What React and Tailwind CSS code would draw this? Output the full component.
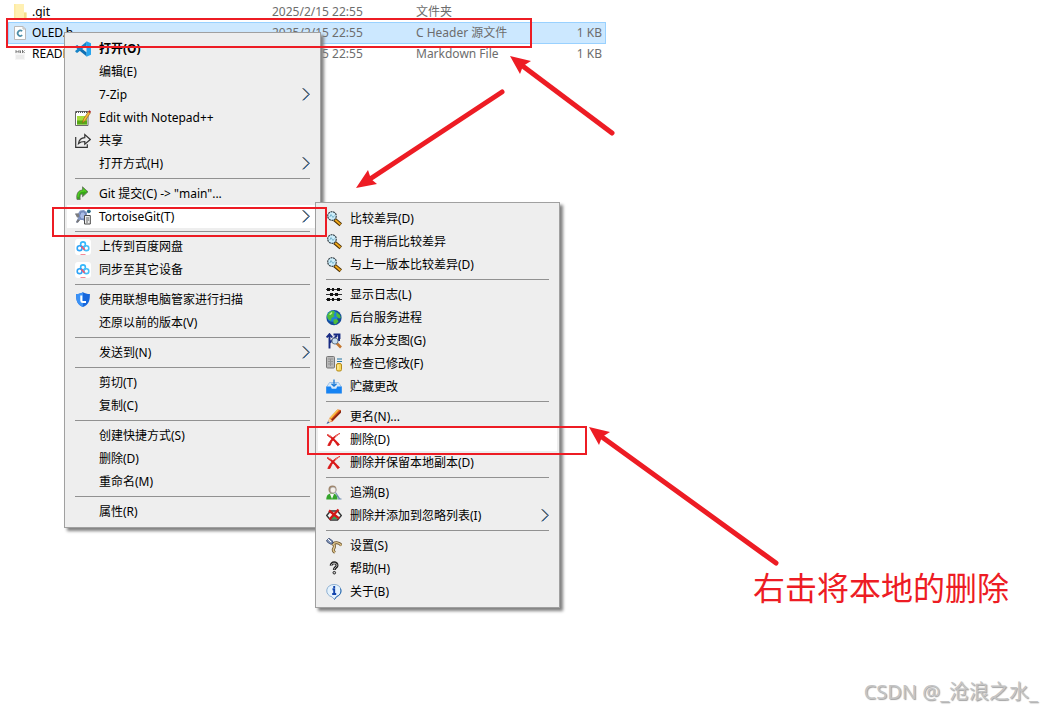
import React from 'react';

const RED = '#ed1c24';

const files = [
  { icon: 'folder', name: '.git', date: '2025/2/15 22:55', type: '文件夹', size: '' },
  { icon: 'header', name: 'OLED.h', date: '2025/2/15 22:55', type: 'C Header 源文件', size: '1 KB', selected: true },
  { icon: 'markdown', name: 'README.md', date: '2025/2/15 22:55', type: 'Markdown File', size: '1 KB' },
];

// null entries are drawn as separators
const contextMenu = [
  { icon: 'vscode', label: '打开(O)', bold: true },
  { label: '编辑(E)' },
  { label: '7-Zip', submenu: true },
  { icon: 'notepad', label: 'Edit with Notepad++' },
  { icon: 'share', label: '共享' },
  { label: '打开方式(H)', submenu: true },
  null,
  { icon: 'commit', label: 'Git 提交(C) -> "main"...' },
  { icon: 'tortoise', label: 'TortoiseGit(T)', submenu: true, active: true },
  null,
  { icon: 'netdisk', label: '上传到百度网盘' },
  { icon: 'netdisk', label: '同步至其它设备' },
  null,
  { icon: 'shield', label: '使用联想电脑管家进行扫描' },
  { label: '还原以前的版本(V)' },
  null,
  { label: '发送到(N)', submenu: true },
  null,
  { label: '剪切(T)' },
  { label: '复制(C)' },
  null,
  { label: '创建快捷方式(S)' },
  { label: '删除(D)' },
  { label: '重命名(M)' },
  null,
  { label: '属性(R)' },
];

const tortoiseMenu = [
  { icon: 'magnifier', label: '比较差异(D)' },
  { icon: 'magnifier', label: '用于稍后比较差异' },
  { icon: 'magnifier', label: '与上一版本比较差异(D)' },
  null,
  { icon: 'log', label: '显示日志(L)' },
  { icon: 'globe', label: '后台服务进程' },
  { icon: 'graph', label: '版本分支图(G)' },
  { icon: 'modified', label: '检查已修改(F)' },
  { icon: 'stash', label: '贮藏更改' },
  null,
  { icon: 'pencil', label: '更名(N)...' },
  { icon: 'cross', label: '删除(D)', active: true },
  { icon: 'cross', label: '删除并保留本地副本(D)' },
  null,
  { icon: 'blame', label: '追溯(B)' },
  { icon: 'ignore', label: '删除并添加到忽略列表(I)', submenu: true },
  null,
  { icon: 'settings', label: '设置(S)' },
  { icon: 'help', label: '帮助(H)' },
  { icon: 'about', label: '关于(B)' },
];

const icons = {
  folder: (
    <>
      <path d="M2 0h10v8.500h2.500V15H2z" fill="#fff0b3" />
      <path d="M12 8.500h2.500V15H12z" fill="#f5dc8a" />
      <path d="M2 0h1.500v15H2z" fill="#fde9a0" />
    </>
  ),
  header: (
    <>
      <path d="M2.500 1.500h8.500l2.500 2.500v10.500h-11z" fill="#fff" stroke="#b9b9b9" />
      <path d="M11 1.500V4h2.500" fill="none" stroke="#b9b9b9" />
      <path d="M10.200 6.200a2.700 2.700 0 1 0 0 4" fill="none" stroke="#4d8ea8" strokeWidth="1.700" />
    </>
  ),
  markdown: (
    <>
      <path d="M3 7h10v7H3z" fill="#f6f6f6" />
      <path d="M4 7V4.500l1.500 1.700L7 4.500V7M8.500 4.500V7M10.500 4v3M12.500 4.500l-1 1 1 1.500" fill="none" stroke="#777" />
      <path d="M4 10h8M4 12h8" stroke="#e0e0e0" />
    </>
  ),
  vscode: (
    <>
      <path d="M.3 5.200 2.100 4l9.600 7.500v4L.4 6.300z" fill="#0f6fb3" />
      <path d="M.3 10.800 2.100 12l9.600-7.500v-4L.4 9.700z" fill="#1683c7" />
      <path d="M11.500.3 16 2.300v11.400l-4.500 2z" fill="#27a5ef" />
    </>
  ),
  notepad: (
    <>
      <path d="M.5 1.500h12.500v14H.5z" fill="#fff" stroke="#6b6b6b" />
      <path d="M2 6h10v8.500H2z" fill="#a6dc3c" />
      <path d="M2 10.500h10v4H2z" fill="#57a818" />
      <path d="M1 2h12" stroke="#555" strokeDasharray="1 1" strokeWidth="2" />
      <path d="m7.500 13 1-4 5-7.500 2 1.200-5 7.500z" fill="#f6b93a" stroke="#8c5b12" strokeWidth=".6" />
      <path d="m13.300 2 .8-1.800 1.800 1-.8 1.800z" fill="#b3182b" />
    </>
  ),
  share: (
    <path
      d="M.7 4v10.300h11.600v-3M3.500 10.500C4 7 6.300 5 9.800 4.700V1.500l5.500 5-5.500 4.700V8.500c-3 0-4.800.5-6.300 2z"
      fill="none"
      stroke="#333"
      strokeWidth="1.200"
    />
  ),
  commit: (
    <>
      <path d="M2 13.500C1 8 3 4.300 7.500 4V.8l5.500 5-5.500 5V8C5.200 8 4.800 10 5.200 13.500z" fill="#38a51b" stroke="#66715f" strokeWidth=".8" />
      <path d="M3 11c0-4 2-6 5.500-6V3.500l2.500 2.300" fill="none" stroke="#52cc22" strokeWidth="1.300" />
    </>
  ),
  tortoise: (
    <>
      <path d="M.2 5 3 4.500l2-3 4-.5 3 2.500V9l2 4H10l-2-2H5l-2.500 3L1 13l2-4z" fill="#8598c5" />
      <path d="M4.500 7 6 3h3.500L11 7l-2 3H6z" fill="#a9bce6" stroke="#6177ab" strokeWidth=".8" />
      <path d="M0 4.500h3.800L4.200 8 2 8.500z" fill="#7d7d7d" />
      <path d="M2.500 10.500 1 13.500h2L5 11z" fill="#777" />
      <circle cx="13.800" cy="2.300" r="1.900" fill="#286a86" />
      <path d="M9.500 6.500h5.800v8.500H9.500z" fill="#eee" stroke="#4a4a4a" />
      <path d="M11 9h3M11 11h3M11 13h2" stroke="#555" strokeWidth=".9" />
    </>
  ),
  netdisk: (
    <>
      <rect width="16" height="16" rx="3" fill="#fff" />
      <g fill="none" strokeWidth="1.600">
        <circle cx="8" cy="5.300" r="2.400" stroke="#35b7fb" />
        <circle cx="4.600" cy="9.200" r="2.400" stroke="#2fa4f7" />
        <circle cx="11.400" cy="9.200" r="2.400" stroke="#45c0fb" />
        <path d="m6.300 7.300 3.400 3.600" stroke="#f2566c" />
      </g>
      <path d="M5.500 15.500h5" stroke="#f38a98" />
    </>
  ),
  shield: (
    <>
      <path d="M8 .2c2 1.200 4 1.800 6.900 1.800 0 6-.5 10.500-6.900 13C1.600 12.500 1.100 8 1.100 2 4 2 6 1.400 8 .2z" fill="#1767dc" />
      <path d="M8 .2V15C1.600 12.500 1.100 8 1.100 2 4 2 6 1.400 8 .2z" fill="#3c92f6" />
      <path d="M6.300 3.500v5.200c0 1 .5 1.400 1.500 1.400H11" fill="none" stroke="#fff" strokeWidth="2" />
    </>
  ),
  magnifier: (
    <>
      <path d="m8.500 8.500 6.300 5.300" stroke="#4a2e00" strokeWidth="4" />
      <path d="m9 8.800 5.500 4.600" stroke="#f0a81c" strokeWidth="1.900" />
      <circle cx="6" cy="5" r="4.300" fill="#cdeefb" stroke="#3c484f" strokeWidth="1.200" strokeDasharray="2 .6" />
      <path d="M3.800 6 5 3.500l2 3L8.500 4.500" fill="none" stroke="#78b4cd" />
    </>
  ),
  log: (
    <>
      <path d="M0 2.500h16M0 7.500h16M0 12.500h16" stroke="#333" />
      <path d="M1 1h3v3H1zM6 1h2v3H6zM11 1h3v3h-3zM4 6h3v3H4zM9 6h3v3H9zM1 11h3v3H1zM6 11h2v3H6zM11 11h3v3h-3z" fill="#111" />
    </>
  ),
  globe: (
    <>
      <circle cx="8" cy="7.700" r="7.600" fill="#134c9c" />
      <circle cx="6.500" cy="6.200" r="5.600" fill="#2180d8" />
      <path d="M1 6c.8-3 3-5 6.500-5.500L9 2.500 7.500 4.500l1 2-3 1.500L5 11 2 9zM10.500 2l3.500 3 .8 3-2 .5-2.500-2.500zM7.500 9.500 11 9l1.500 2.500-3 3-2-1z" fill="#4fbd3a" />
      <path d="M3 4.500 5.500 2l1 1-2 2z" fill="#c3f2a0" />
    </>
  ),
  graph: (
    <>
      <path d="M3.500 15.500V2M.7 4.500 3.500 1.200l2.800 3.300M3.500 10 11 2.500M7.500 1.500h6V6M13 2v6" fill="none" stroke="#182b83" strokeWidth="1.900" />
      <path d="m10 9.500 5 5" stroke="#c3762f" strokeWidth="2.600" />
      <circle cx="9" cy="8" r="3.100" fill="#c8def0" stroke="#637587" />
    </>
  ),
  modified: (
    <>
      <rect x=".5" y=".5" width="8" height="11.500" rx="1" fill="#b8b8b8" stroke="#777" />
      <path d="M2 3h5M2 5.500h5M2 8h5M4.500 3v7" stroke="#939393" />
      <path d="M11 3h5M11 5.500h5" stroke="#2375a3" />
      <rect x="10.500" y="7.500" width="5" height="7.500" rx="1.500" fill="#f6d75f" stroke="#b58b1b" />
      <path d="M12 9v4.500" stroke="#fff5bc" />
    </>
  ),
  stash: (
    <>
      <path d="m.5 8 3-4.500h9l3 4.500v6.500H.5z" fill="#d7e9fa" stroke="#8fb9e4" strokeWidth=".8" />
      <path d="M.3 7.500h4.500l1 2.200h4.400l1-2.200h4.500v6.800H.3z" fill="#1683f3" />
      <path d="M8 .5v6.500M5.500 4.700 8 7.200l2.500-2.500" fill="none" stroke="#1877d6" strokeWidth="1.300" />
    </>
  ),
  pencil: (
    <>
      <path d="m1.500 14 2-5 8-8.500 3.500.5-.5 3-8 8.500z" fill="#e55a17" />
      <path d="M3.500 9 11.500.5l1.500.5-8 8.800z" fill="#f8c84c" />
      <path d="m6 12 9-8.500V1.300L5.500 10.500z" fill="#7d2518" />
      <path d="m1.500 14 2-5 2.500 3z" fill="#f5d9a5" />
      <path d="M.5 15 2 12.200l1.500 1.500z" fill="#3a60a8" />
    </>
  ),
  cross: (
    <>
      <path d="M1.500 2.500C6 4.500 10 8.500 13.500 12.500l-1.800 1.200C9 9.500 5.500 6 1.500 3.500z" fill="#d91818" stroke="#d91818" strokeWidth=".8" />
      <path d="M13.800 1.500C9.500 4 5.800 8 4 13.500H1.800C4.300 7.500 8.500 3.500 13.800 1.500z" fill="#d91818" stroke="#d91818" strokeWidth=".8" />
      <path d="M2 2.500 5.500 4.500M13 2 9.500 4.500" stroke="#f48b80" />
    </>
  ),
  blame: (
    <>
      <path d="M.3 14.500C.3 10 2.500 8.500 6 8.500s5.500 1.500 5.500 6z" fill="#34a52b" />
      <path d="m4 9 2 5 2-5z" fill="#f6f6f6" />
      <circle cx="6.500" cy="4.500" r="4" fill="#9f856b" />
      <circle cx="7" cy="5" r="2.900" fill="#f6f0eb" stroke="#999" strokeWidth=".6" />
      <path d="m9.500 7.500 4 6M12 14h3.500M11 11l3 3" stroke="#6f8fb2" strokeWidth="1.200" />
    </>
  ),
  ignore: (
    <>
      <path d="M.7 7.500 4.500 3h7l3.800 4.500L11.500 12h-7z" fill="#f6f6f6" stroke="#333" strokeWidth="1.400" />
      <path d="M4.500 11 8 6.500l3.500 4.500z" fill="#31a55b" />
      <path d="m3 2.500 10 8M12.500 1.500l-9 10" stroke="#cf1717" strokeWidth="2.400" />
    </>
  ),
  settings: (
    <>
      <path d="M6 5.500c3 1 3 3 1.500 5.500-.6 1.300 0 2.500 1.500 3.500M7 6c3-2 6.500-1.500 8.500 1.500" fill="none" stroke="#6b532c" strokeWidth="3" />
      <path d="M6 5.500c3 1 3 3 1.500 5.500-.6 1.300 0 2.500 1.500 3.500M7 6c3-2 6.500-1.500 8.500 1.500" fill="none" stroke="#dfc58d" strokeWidth="1.500" />
      <path d="M.5 2.500 3 .3l3.500 2.500.5 2.500-2 1-3.500-2z" fill="#8496b8" stroke="#283b63" strokeWidth=".8" />
      <path d="m2 1 3 3" stroke="#fff" />
    </>
  ),
  help: (
    <>
      <path d="M5.200 4.700C5 .8 11.300 1 11 4.500c-.2 2-2.700 2-2.700 4.500" fill="none" stroke="#222" strokeWidth="3" />
      <path d="M5.200 4.500C5.300 1.500 11.200 1.400 10.900 4.500c-.2 1.700-2.600 2.200-2.600 4" fill="none" stroke="#ccc" strokeWidth="1" />
      <circle cx="8.300" cy="11.700" r="1.300" fill="#ccc" stroke="#222" />
    </>
  ),
  about: (
    <>
      <path d="M8 .5a7 6.300 0 0 1 2.500 12.200L8.500 15.500 6 12.900A7 6.300 0 0 1 8 .5z" fill="#e4f2fd" stroke="#8eb0d2" />
      <path d="M14.500 4.500a7 6.300 0 0 1-4 8.200l-2 2.800" fill="none" stroke="#2d6db1" />
      <path d="M8.200 2v2M6.500 5.200h1.700V10M6.200 10h4" fill="none" stroke="#1144ad" strokeWidth="1.900" />
    </>
  ),
};

const Icon = ({ name }) => (
  <svg viewBox="0 0 16 16" className="size-4 shrink-0" aria-hidden="true">
    {icons[name]}
  </svg>
);

const Chevron = () => (
  <svg viewBox="0 0 8 14" className="h-3.5 w-2 shrink-0" fill="none" aria-hidden="true">
    <path d="M.3.300 6.300 6.300l-6 6" stroke="#d9a066" />
    <path d="M1.700.300 7.700 6.300l-6 6" stroke="#4c9be6" />
    <path d="M1 .3 7 6.300l-6 6" stroke="#1d3a63" />
  </svg>
);

const Menu = ({ items, label, className }) => (
  <div
    role="menu"
    aria-label={label}
    className={`absolute border border-[#a0a0a0] bg-[#eeeeee] px-0.5 py-1 text-xs text-black shadow-[3px_3px_3px_#808080] ${className}`}
  >
    {items.map((item, i) =>
      item === null ? (
        <div key={i} role="separator" className="mx-2 my-[3px] h-px bg-[#919191]" />
      ) : (
        <button
          key={i}
          type="button"
          role="menuitem"
          className={`flex h-[23px] w-full items-center gap-2 px-2 text-left ${item.active ? 'bg-white' : ''}`}
        >
          <Icon name={item.icon} />
          <span className={`grow whitespace-nowrap ${item.bold ? 'font-bold' : ''}`}>{item.label}</span>
          {item.submenu && <Chevron />}
        </button>
      )
    )}
  </div>
);

const FileList = () => (
  <table className="ml-2 w-full max-w-[598px] table-fixed border-separate border-spacing-0 text-xs">
    <colgroup>
      <col className="w-[264px]" />
      <col className="w-36" />
      <col />
      <col className="w-16" />
    </colgroup>
    <tbody>
      {files.map((file) => {
        const cell = file.selected
          ? 'h-[22px] border-y border-[#99d1ff] bg-[#cce8ff] py-0'
          : 'h-5 py-0';
        return (
          <tr key={file.name} className="text-[#6d6d6d]">
            <td className={`${cell} text-black ${file.selected ? 'border-l pl-[3px]' : 'pl-1'}`}>
              <div className="flex items-center gap-1">
                <Icon name={file.icon} />
                <span>{file.name}</span>
              </div>
            </td>
            <td className={`${cell} px-0`}>{file.date}</td>
            <td className={`${cell} px-0`}>{file.type}</td>
            <td className={`${cell} text-right ${file.selected ? 'border-r pr-[3px]' : 'pr-1'}`}>{file.size}</td>
          </tr>
        );
      })}
    </tbody>
  </table>
);

const Arrows = () => (
  <svg width="1042" height="710" viewBox="0 0 1042 710" className="pointer-events-none absolute top-0 left-0" aria-hidden="true">
    <g stroke={RED} strokeWidth="5" strokeLinecap="round">
      <path d="M612 133 524 67" />
      <path d="M502 92 370 179" />
      <path d="M776 563 602 437" />
    </g>
    <g fill={RED}>
      <path d="m510 56 21 5-8 5-3 8z" />
      <path d="m356 188 12-18 3 9 6 5z" />
      <path d="m589 427 21 5-8 5-3 8z" />
    </g>
  </svg>
);

export default function App() {
  return (
    <main className="relative min-h-screen overflow-hidden bg-white pt-0.5 font-['Noto_Sans','Noto_Sans_CJK_SC',sans-serif]">
      <FileList />

      <Menu items={contextMenu} label="文件" className="top-8 left-16 w-[257px]" />
      <Menu items={tortoiseMenu} label="TortoiseGit" className="top-[202px] left-[315px] w-[245px]" />

      {/* Annotations */}
      <div className="pointer-events-none absolute top-[18px] left-1.5 h-[30px] w-[526px] border-2 border-[#ed1c24]" />
      <div className="pointer-events-none absolute top-[207px] left-[52px] h-[30px] w-[275px] border-2 border-[#ed1c24]" />
      <div className="pointer-events-none absolute top-[426px] left-[307px] h-[29px] w-[280px] border-2 border-[#ed1c24]" />
      <Arrows />
      <p className="absolute top-[568px] left-[753px] text-[32px] leading-10 whitespace-nowrap text-[#ed1c24]">
        右击将本地的删除
      </p>
      <p className="absolute right-1 bottom-1 text-xl leading-7 whitespace-nowrap text-[#c4c4c4] [text-shadow:1px_1px_1px_#a0a0a0]">
        CSDN @_沧浪之水_
      </p>
    </main>
  );
}
